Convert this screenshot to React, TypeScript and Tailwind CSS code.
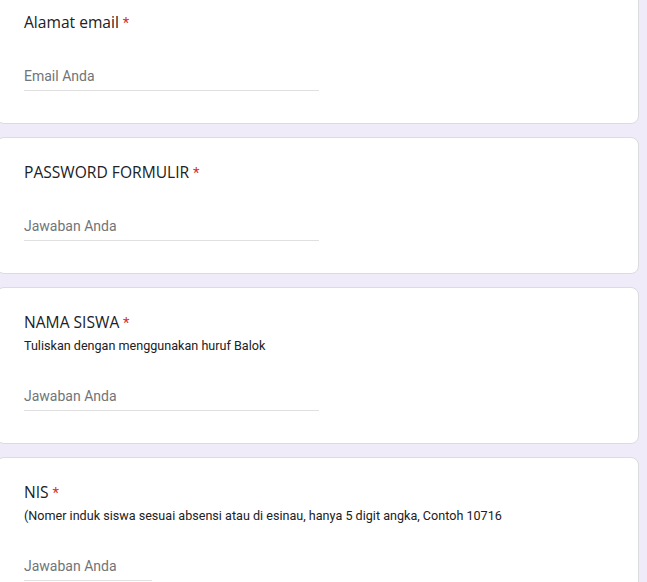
import React from "react";

type Question = {
  title: string;
  desc?: string;
  placeholder: string;
  inputWidth: string;
};

const questions: Question[] = [
  { title: "Alamat email", placeholder: "Email Anda", inputWidth: "w-[295px]" },
  { title: "PASSWORD FORMULIR", placeholder: "Jawaban Anda", inputWidth: "w-[295px]" },
  {
    title: "NAMA SISWA",
    desc: "Tuliskan dengan menggunakan huruf Balok",
    placeholder: "Jawaban Anda",
    inputWidth: "w-[295px]",
  },
  {
    title: "NIS",
    desc: "(Nomer induk siswa sesuai absensi atau di esinau, hanya 5 digit angka, Contoh 10716",
    placeholder: "Jawaban Anda",
    inputWidth: "w-[128px]",
  },
];

const QuestionCard: React.FC<{ q: Question }> = ({ q }) => (
  <div className="bg-white border border-[#dadce0] rounded-lg pl-[27px] pt-[22px] pb-[32px]">
    <div className="h-[24px] font-['Open_Sans',sans-serif] text-[15.6px] leading-[24px] text-[#202124]">
      {q.title}
      <span className="font-['Roboto',sans-serif] text-[15px] leading-none text-[#d93025]"> *</span>
    </div>
    {q.desc && (
      <div className="h-[20px] mt-[2px] font-['Roboto',sans-serif] text-[12.6px] leading-[20px] text-[#202124]">
        {q.desc}
      </div>
    )}
    <div className={q.desc ? "mt-[28px]" : "mt-[30px]"}>
      <div
        className={`${q.inputWidth} h-[27px] pb-[2px] border-b border-[#e0e0e0] font-['Roboto',sans-serif] text-[14px] leading-[24px] text-[#70757a]`}
      >
        {q.placeholder}
      </div>
    </div>
  </div>
);

export default function App() {
  return (
    <div className="w-[647px] h-[582px] overflow-hidden bg-[#f0ebf8]">
      <div className="ml-[-4px] w-[643px] -mt-[13px] flex flex-col gap-[13px]">
        {questions.map((q) => (
          <QuestionCard key={q.title} q={q} />
        ))}
      </div>
    </div>
  );
}
